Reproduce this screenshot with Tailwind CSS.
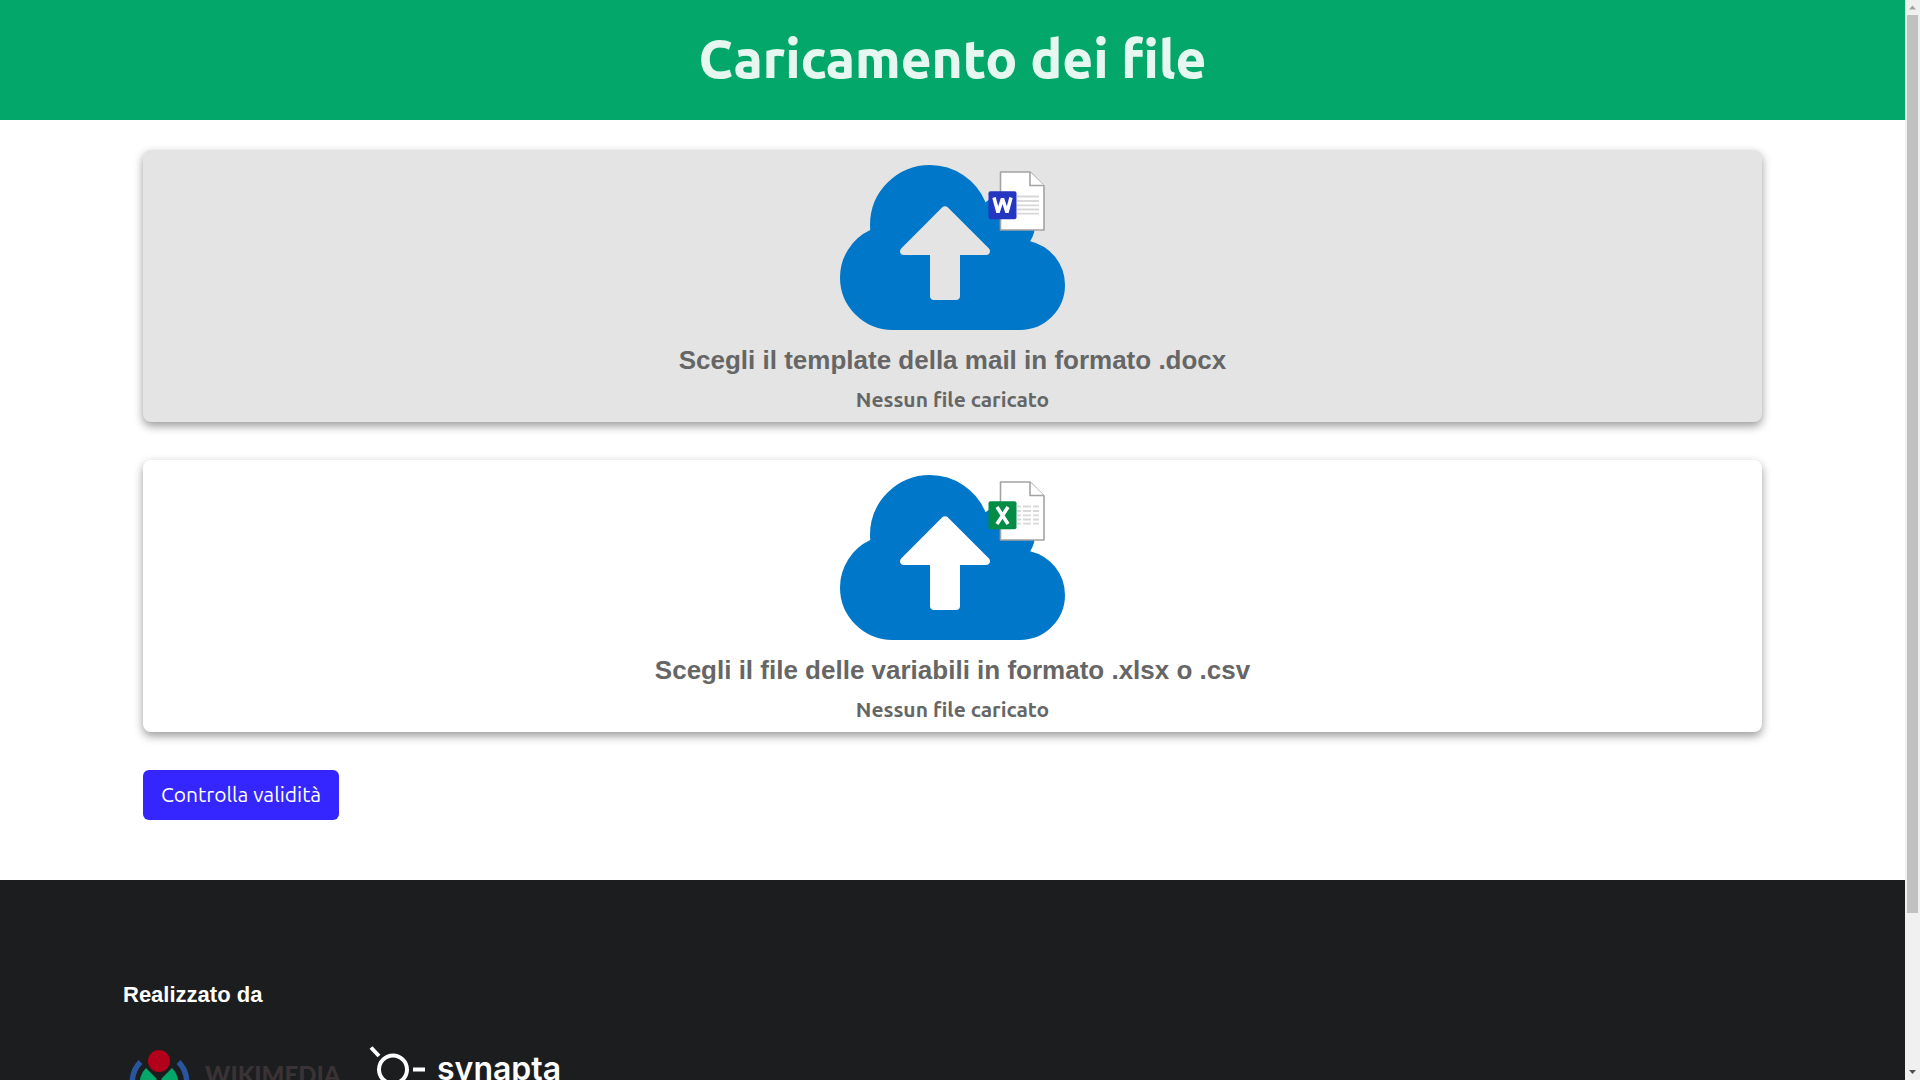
<!DOCTYPE html>
<html lang="it">
<head>
<meta charset="utf-8">
<meta name="viewport" content="width=device-width, initial-scale=1">
<title>Caricamento dei file</title>
<script src="https://cdn.jsdelivr.net/npm/@tailwindcss/browser@4"></script>
</head>
<body class="flex h-screen overflow-hidden bg-white font-['Ubuntu','Noto_Sans',sans-serif]">
<svg class="hidden" aria-hidden="true">
  <symbol id="cloud" viewBox="0 128 1920 1408"><path fill="#0077c8" d="M1280 864q0-14-9-23l-352-352q-9-9-23-9t-23 9l-351 351q-10 12-10 24 0 14 9 23t23 9h224v352q0 13 9.500 22.500t22.500 9.500h192q13 0 22.500-9.500t9.500-22.500v-352h224q13 0 22.500-9.500t9.500-22.500zm640 288q0 159-112.500 271.500t-271.500 112.500h-1088q-185 0-316.500-131.500t-131.500-316.500q0-130 70-240t188-165q-2-30-2-43 0-212 150-362t362-150q156 0 285.500 87t188.500 231q71-62 166-62 106 0 181 75t75 181q0 76-41 138 130 31 213.500 135.500t83.500 238.500z"/></symbol>
  <symbol id="sheet" viewBox="0 0 60 62"><path d="M13.500 2.500h29.500l14 14v44h-43.500z" fill="#fff" stroke="#a3a3a3" stroke-width="1.600" stroke-linejoin="round"/><path d="M43 2.500v13.500h14" fill="#fff" stroke="#a3a3a3" stroke-width="1.600"/></symbol>
</svg>
<div class="min-w-0 flex-1 overflow-y-auto [scrollbar-width:none]">
  <header class="flex h-[120px] items-center justify-center bg-[#02a769] pb-0.5">
    <h1 class="text-[53px] leading-[64px] font-extrabold text-white/90">Caricamento dei file</h1>
  </header>
  <main class="flex flex-col items-start gap-[38px] px-[7.5%] pt-[30px] pb-[60px]">
    <label class="relative flex w-full flex-col items-center rounded-lg bg-[#e4e4e4] pt-[15px] pb-[9px] text-[#666] shadow-[0_4px_10px_rgba(0,0,0,0.4)]">
      <input type="file" accept=".docx" class="sr-only">
      <svg class="h-[165px] w-[225px]" viewBox="0 0 225 165" aria-hidden="true">
        <use href="#cloud" width="225" height="165"/>
        <use href="#sheet" x="147" y="4.500" width="60" height="62"/>
        <path d="M177 31.500h22M177 36h22M177 40.300h22M177 44.500h22M177 48.700h22" stroke="#d8d8d8" stroke-width="1.800"/>
        <rect x="148.500" y="26.300" width="28" height="28" rx="2" fill="#2536c0"/>
        <path d="M154 32.500l4 15 4.500-14 4.500 14 4-15" fill="none" stroke="#fff" stroke-width="3.500" stroke-linejoin="bevel"/>
      </svg>
      <span class="mt-3.5 text-[26px] leading-8 font-bold font-['Liberation_Sans',Arial,sans-serif]">Scegli il template della mail in formato .docx</span>
      <span class="mt-[9px] text-[21px] leading-7 font-bold">Nessun file caricato</span>
    </label>
    <label class="relative flex w-full flex-col items-center rounded-lg bg-white pt-[15px] pb-[9px] text-[#666] shadow-[0_4px_10px_rgba(0,0,0,0.4)]">
      <input type="file" accept=".xlsx,.csv" class="sr-only">
      <svg class="h-[165px] w-[225px]" viewBox="0 0 225 165" aria-hidden="true">
        <use href="#cloud" width="225" height="165"/>
        <use href="#sheet" x="147" y="4.500" width="60" height="62"/>
        <path d="M177 31.500h22M177 36h22M177 40.300h22M177 44.500h22M177 48.700h22" stroke="#d8d8d8" stroke-width="1.800" stroke-dasharray="4 2 8 2 8"/>
        <rect x="148.500" y="26.300" width="28" height="28" rx="2" fill="#038c45"/>
        <path d="M157 32l11 17M168 32l-11 17" stroke="#fff" stroke-width="3.600"/>
      </svg>
      <span class="mt-3.5 text-[26px] leading-8 font-bold font-['Liberation_Sans',Arial,sans-serif]">Scegli il file delle variabili in formato .xlsx o .csv</span>
      <span class="mt-[9px] text-[21px] leading-7 font-bold">Nessun file caricato</span>
    </label>
    <button type="button" class="h-[50px] rounded-md bg-[#3526ff] px-[18px] text-[21px] text-white">Controlla validità</button>
  </main>
  <footer class="h-[384px] bg-[#1c1d1f] px-[123px] pt-[99px]">
    <h2 class="text-[22px] leading-8 font-bold text-white font-['Liberation_Sans',Arial,sans-serif]">Realizzato da</h2>
    <div class="mt-[29px] flex gap-6">
      <a href="#" aria-label="Wikimedia Italia">
        <svg class="h-[80px] w-[222px]" viewBox="0 0 222 80" aria-hidden="true">
          <circle cx="36" cy="21" r="11" fill="#b3001b"/>
          <path d="M17.500 22a28.500 28.500 0 0 0 0 40M55.500 22a28.500 28.500 0 0 1 0 40" fill="none" stroke="#29559f" stroke-width="5.500"/>
          <path d="M33.500 38.500v22.300a19 19 0 0 1-10.500-32.800zM38.500 38.500v22.300a19 19 0 0 0 10.500-32.800z" fill="#02a769"/>
          <text x="82" y="44" fill="#3a3335" font-family="Lato, sans-serif" font-weight="900" font-size="24">WIKIMEDIA</text>
          <text x="82" y="74" fill="#3a3335" font-family="Lato, sans-serif" font-weight="900" font-size="24">ITALIA</text>
        </svg>
      </a>
      <a href="#" aria-label="synapta">
        <svg class="h-[60px] w-[194px]" viewBox="0 0 194 60" aria-hidden="true">
          <g fill="none" stroke="#fff"><circle cx="24" cy="29.500" r="14" stroke-width="4"/><path d="M2 7.500l8 8.500M44 29.500h12" stroke-width="4"/></g>
          <text x="68" y="40" fill="#fff" font-family="Inter, sans-serif" font-weight="600" font-size="32">synapta</text>
        </svg>
      </a>
    </div>
  </footer>
</div>
<div class="flex w-[15px] shrink-0 flex-col items-center bg-[#f0f0f0]" aria-hidden="true">
  <svg class="h-[15px] w-[15px]" viewBox="0 0 15 15"><path d="M4 9.500l3.500-4 3.500 4z" fill="#a3a3a3"/></svg>
  <div class="min-h-0 w-[11px] grow-[898] bg-[#c1c1c1]"></div>
  <div class="grow-[152]"></div>
  <svg class="h-[15px] w-[15px]" viewBox="0 0 15 15"><path d="M4 5l3.500 4 3.500-4z" fill="#505050"/></svg>
</div>
</body>
</html>
